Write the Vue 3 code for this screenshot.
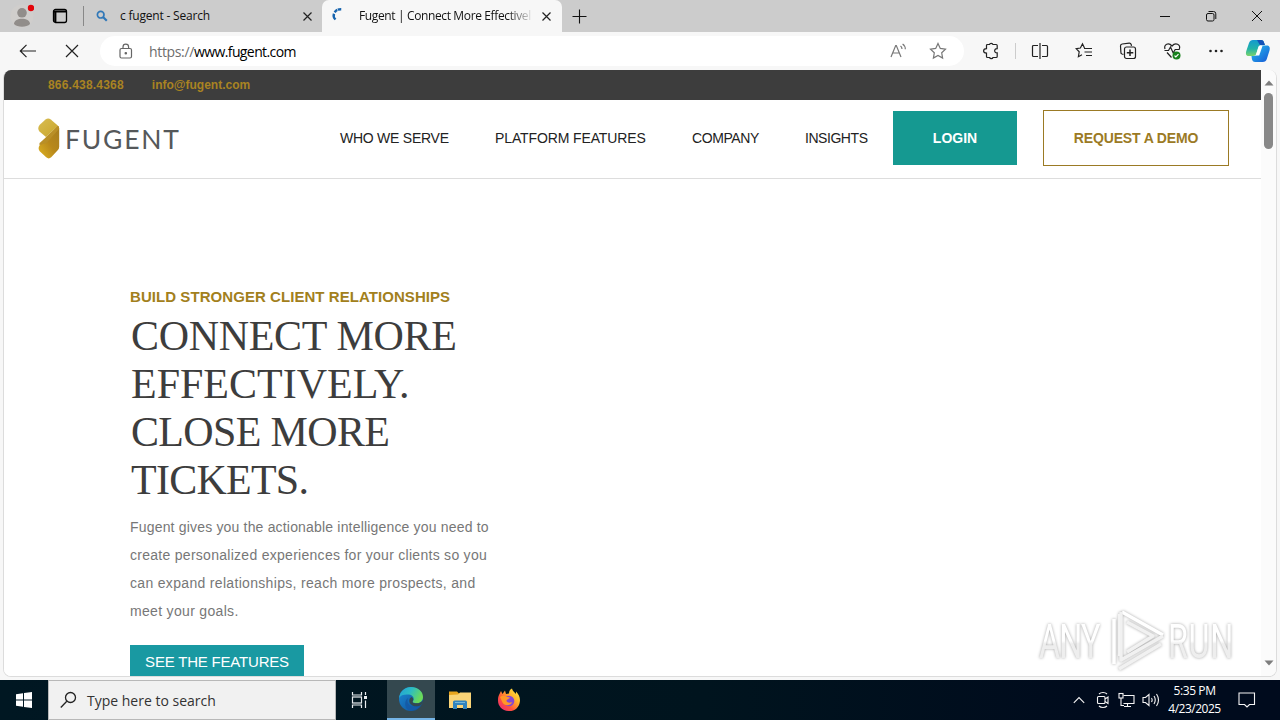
<script setup>
import { ref } from 'vue'

const contacts = [
  { label: '866.438.4368', tracking: 0.2 },
  { label: 'info@fugent.com', tracking: 0 },
]

const navItems = [
  { label: 'WHO WE SERVE', name: 'serve', tracking: -0.25 },
  { label: 'PLATFORM FEATURES', name: 'platform', tracking: -0.12 },
  { label: 'COMPANY', name: 'company', tracking: -0.4 },
  { label: 'INSIGHTS', name: 'insights', tracking: -0.45 },
]

const headline = [
  { text: 'CONNECT MORE', tracking: -0.33 },
  { text: 'EFFECTIVELY.', tracking: 0 },
  { text: 'CLOSE MORE', tracking: -0.65 },
  { text: 'TICKETS.', tracking: -0.75 },
]

const intro = [
  { text: 'Fugent gives you the actionable intelligence you need to', tracking: 0.18 },
  { text: 'create personalized experiences for your clients so you', tracking: 0.28 },
  { text: 'can expand relationships, reach more prospects, and', tracking: 0.32 },
  { text: 'meet your goals.', tracking: 0.32 },
]

const activeTab = ref('fugent')

const track = (item) => ({ letterSpacing: `${item.tracking}px` })
</script>

<template>
  <div class="desktop">
    <header class="tab-strip">
      <svg class="profile" width="24" height="24" viewBox="0 0 24 24">
        <circle cx="12" cy="12" r="11.5" fill="#d0cecc" />
        <circle cx="12" cy="8.800" r="4.800" fill="#918d8a" />
        <path d="M4 20c0-7 16-7 16 0-3 3.500-13 3.500-16 0z" fill="#918d8a" />
        <circle cx="21" cy="4" r="3.200" fill="#e3050b" />
      </svg>
      <svg class="tab-actions" width="16" height="16" viewBox="0 0 16 16">
        <rect x="1.500" y="1.500" width="13" height="13" rx="2" fill="none" stroke="#000" stroke-width="1.300" />
        <path d="M1.500 3.500h13M3.300 3v11" stroke="#000" stroke-width="2.200" />
      </svg>
      <span class="strip-divider"></span>

      <div class="tab" :class="{ active: activeTab === 'search' }">
        <svg class="favicon" width="12" height="12" viewBox="0 0 12 12" fill="none" stroke="#3178b8">
          <circle cx="4.700" cy="4.700" r="3.300" stroke-width="1.700" />
          <path d="M7 7l3.800 3.800" stroke-width="2.200" />
        </svg>
        <span class="tab-title first-title">c fugent - Search</span>
        <svg class="close" width="9" height="9" viewBox="0 0 9 9"><path d="M.5.5l8 8M8.500.5l-8 8" /></svg>
      </div>

      <div class="tab second-tab" :class="{ active: activeTab === 'fugent' }">
        <svg class="favicon spinner" width="14" height="14" viewBox="0 0 14 14" fill="none" stroke="#1764ae" stroke-width="2.400">
          <path d="M4.500 12.500C2.500 10.500 2.300 8.500 3 6.700" />
          <path d="M3.700 5.300C5 3 7.500 2 10.800 2.200" stroke-dasharray="3.500 .6" />
        </svg>
        <span class="tab-title second-title">Fugent | Connect More Effectivel</span>
        <svg class="close" width="9" height="9" viewBox="0 0 9 9"><path d="M.5.5l8 8M8.500.5l-8 8" /></svg>
      </div>

      <svg class="new-tab" width="15" height="15" viewBox="0 0 15 15"><path d="M7.500.5v14M.5 7.500h14" stroke="#111" stroke-width="1.100" /></svg>

      <div class="window-controls">
        <svg width="12" height="12" viewBox="0 0 12 12"><path d="M1 6.500h10" /></svg>
        <svg width="12" height="12" viewBox="0 0 12 12">
          <rect x="1.500" y="3.500" width="7.500" height="7.500" rx="1.500" />
          <path d="M3.500 1.500H8.500a2.300 2.300 0 0 1 2.300 2.300V9" />
        </svg>
        <svg width="12" height="12" viewBox="0 0 12 12"><path d="M1 1l10 10M11 1L1 11" /></svg>
      </div>
    </header>

    <div class="toolbar">
      <svg class="back" width="18" height="14" viewBox="0 0 18 14"><path d="M7.500.8L1.300 7l6.200 6.200M1.300 7H17" /></svg>
      <svg class="stop" width="14" height="14" viewBox="0 0 14 14"><path d="M1 1l12 12M13 1L1 13" /></svg>
      <div class="address">
        <svg class="lock" width="14" height="16" viewBox="0 0 14 16">
          <rect x="1" y="5.500" width="11.500" height="9.500" rx="1.500" />
          <path d="M4 5.500V4a2.800 2.800 0 0 1 5.600 0v1.500" />
          <circle cx="6.800" cy="10.200" r=".7" fill="#666" />
        </svg>
        <span class="url"><span>https://</span>www.fugent.com</span>
        <svg class="read-aloud" width="17" height="16" viewBox="0 0 17 16">
          <path d="M1 14L5.700 2.500h.6L11 14M2.800 10h6.400M10.500 3c1 .7 1.500 1.700 1.500 3M12.600 1c1.900 1.300 2.700 3 2.700 5.200" />
        </svg>
        <svg class="star" width="18" height="18" viewBox="0 0 18 18">
          <path d="M9 1.500l2.300 4.900 5.200.7-3.800 3.700.9 5.300L9 13.500l-4.600 2.600.9-5.300-3.800-3.700 5.200-.7z" />
        </svg>
      </div>
      <div class="tools">
        <svg width="18" height="18" viewBox="0 0 18 18">
          <path d="M5.500 2.500h2c.2-1.500 3.200-1.500 3.400 0h3.300a1 1 0 0 1 1 1v3.200c-3.400-.3-3.400 4.500 0 4.200v3.600a1 1 0 0 1-1 1H11c-.4 1.500-3 1.500-3.400 0H5.500a1 1 0 0 1-1-1v-3.400c-3.900-.3-3.900-4.100 0-4.400V3.500a1 1 0 0 1 1-1z" />
        </svg>
        <i></i>
        <svg width="18" height="18" viewBox="0 0 18 18">
          <path d="M9 1v16M7 3.500H2.500a1 1 0 0 0-1 1v9a1 1 0 0 0 1 1H7M11 3.500h4.500a1 1 0 0 1 1 1v9a1 1 0 0 1-1 1H11" />
        </svg>
        <svg width="18" height="18" viewBox="0 0 18 18">
          <path d="M9.500 6L7.500 1.800 5.400 6l-4.200.6 3 3.200-.8 4.900L7 12.800M9 6.500h8M9.500 10h7.500M11 13.500h6" />
        </svg>
        <svg width="18" height="18" viewBox="0 0 18 18">
          <path d="M4.500 12.300L3 12c-1-.3-1.200-1-1.100-1.800L1.500 4a2 2 0 0 1 1.700-2l7-.9c1.100-.1 1.700.5 2 1.400l.3 1.300" />
          <rect x="5.500" y="5" width="11" height="11.500" rx="2" />
          <path d="M11 7.500v6.500M7.800 10.800h6.500" stroke-width="1.500" />
        </svg>
        <svg width="20" height="18" viewBox="0 0 20 18">
          <path d="M2 7C.6 2.500 5.500-.2 9 4c3.500-4.200 9-1.500 7.300 3M1.500 8.500h4L7.500 5l2.700 6 2-3.500h4.500M4 10.500l4.500 5" />
          <circle cx="13.500" cy="13.500" r="4" fill="#18811d" stroke="none" />
          <path d="M11.500 13.600l1.300 1.200 2.700-2.700" stroke="#fff" />
        </svg>
        <svg width="18" height="18" viewBox="0 0 18 18" class="dots">
          <circle cx="3.500" cy="9" r="1.300" /><circle cx="9" cy="9" r="1.300" /><circle cx="14.500" cy="9" r="1.300" />
        </svg>
        <svg class="copilot" width="26" height="24" viewBox="0 0 26 24">
          <defs>
            <linearGradient id="copilot-left" x1="0" y1="0" x2="0" y2="1">
              <stop offset="0" stop-color="#1499cf" /><stop offset=".55" stop-color="#22b3a8" /><stop offset="1" stop-color="#7bd36b" />
            </linearGradient>
            <linearGradient id="copilot-right" x1="0" y1="0" x2="1" y2="1">
              <stop offset="0" stop-color="#25c0ef" /><stop offset="1" stop-color="#1757d5" />
            </linearGradient>
          </defs>
          <path d="M8 1h8c2 0 2.700 1.300 3.200 3l.7 2h-3.500c-2 0-2.800 1-3.400 3l-1.500 5c-.5 2-1.300 3-3.500 3H4c-3 0-3.500-2-2.700-5L4 4c.7-2 2-3 4-3z" fill="url(#copilot-left)" />
          <path d="M18 6.500h3.500c3 0 3.800 2 3 5l-2.600 8.300c-.7 2.200-2 3.200-4.200 3.200h-7.500c-2 0-2.800-1.200-3.300-3L6.500 17H9c2 0 3-1 3.500-3l1.800-5c.6-1.700 1.500-2.500 3.700-2.500z" fill="url(#copilot-right)" />
          <path d="M14 7h3.500l-3.300 9.500h-3.500z" fill="#fff" />
          <path d="M12 1h4c2 0 2.700 1.300 3.200 3l.7 2h-5z" fill="#1452b8" />
        </svg>
      </div>
    </div>

    <main class="viewport">
      <div class="page">
        <div class="contact-bar">
          <a v-for="contact in contacts" :key="contact.label" :style="track(contact)">{{ contact.label }}</a>
        </div>

        <div class="site-header">
          <svg class="logo" width="146" height="44" viewBox="0 0 146 44">
            <defs>
              <linearGradient id="gold-top" x1="0" y1="0" x2="1" y2="1">
                <stop offset="0" stop-color="#d8bd52" /><stop offset="1" stop-color="#c9a52b" />
              </linearGradient>
              <linearGradient id="gold-side" x1="1" y1="0" x2="0" y2="1">
                <stop offset="0" stop-color="#a57d20" /><stop offset=".5" stop-color="#b8881b" /><stop offset="1" stop-color="#dfb422" />
              </linearGradient>
            </defs>
            <path d="M2.500 9l6-5.500q2.700-2 5.300 0L21 9.800 9 21 2.500 15.500Q0 12.500 2.500 9z" fill="url(#gold-top)" />
            <path d="M21 9.800q1.200 1 1.200 3v18q0 2-1.500 3.500l-6.500 7q-2.500 2.200-5 0l-6.500-6q-2.200-3 0-6z" fill="url(#gold-side)" />
            <path d="M9 21L21 9.800q1.200 1 1.200 3L9.500 27l-7 2.300V27z" fill="#b98f27" />
            <path d="M0 23L9 21l-6 5.500z" fill="#fff" />
            <text x="28" y="33" textLength="114">FUGENT</text>
          </svg>
          <nav>
            <a v-for="item in navItems" :key="item.name" :class="item.name" :style="track(item)">{{ item.label }}</a>
          </nav>
          <button class="login">LOGIN</button>
          <button class="demo">REQUEST A DEMO</button>
        </div>

        <section class="hero">
          <p class="eyebrow">BUILD STRONGER CLIENT RELATIONSHIPS</p>
          <h1><span v-for="line in headline" :key="line.text" :style="track(line)">{{ line.text }}</span></h1>
          <p class="intro"><span v-for="line in intro" :key="line.text" :style="track(line)">{{ line.text }}</span></p>
          <button class="features">SEE THE FEATURES</button>
        </section>
      </div>

      <div class="scrollbar">
        <svg width="10" height="6" viewBox="0 0 10 6"><path d="M5 .5L9.500 5.500h-9z" /></svg>
        <span class="thumb"></span>
        <svg width="10" height="6" viewBox="0 0 10 6"><path d="M5 5.500L9.500.5h-9z" /></svg>
      </div>
    </main>

    <svg class="watermark" width="249" height="76" viewBox="0 0 249 76">
      <defs>
        <linearGradient id="mark-fade" x1="0" y1="0" x2="0" y2="1">
          <stop offset=".5" stop-color="#fff" /><stop offset=".55" stop-color="#eee" />
        </linearGradient>
      </defs>
      <g class="mark">
        <g transform="translate(8 56) scale(.66 1)"><text textLength="93">ANY</text></g>
        <g transform="translate(137 56) scale(.66 1)"><text textLength="99">RUN</text></g>
        <path d="M83 17v45M89 12v42M91 10l41 23" />
        <path d="M90 10v48l42-24M96 20l26 14-26 16M88 67l42-25" class="soft" />
      </g>
    </svg>

    <footer class="taskbar">
      <div class="start">
        <svg width="16" height="16" viewBox="0 0 16 16" fill="#fff">
          <path d="M0 2.200l7-1v6.300H0zM8 1l8-1v7.500H8zM0 8.500h7v6.300l-7-1zM8 8.500h8V16l-8-1z" />
        </svg>
      </div>
      <div class="search-box">
        <svg width="18" height="18" viewBox="0 0 18 18" fill="none" stroke="#222" stroke-width="1.300">
          <circle cx="10.500" cy="6.500" r="5" /><path d="M6.800 10.200L.8 16.500" />
        </svg>
        <span>Type here to search</span>
      </div>
      <div class="task">
        <svg width="18" height="16" viewBox="0 0 18 16" fill="none" stroke="#e8edf0" stroke-width="1.200">
          <path d="M1.500 0v3h9V0M1.500 16v-3h9v3" /><rect x="1.500" y="5" width="9" height="6" />
          <path d="M14.500 0v3M14.500 8.500V16" /><path d="M13 5.500h3" stroke-width="3" />
        </svg>
      </div>
      <div class="task running">
        <svg width="26" height="26" viewBox="0 0 26 26">
          <defs>
            <linearGradient id="edge-green" x1="0" y1="0" x2="1" y2=".4">
              <stop offset="0" stop-color="#239fd7" /><stop offset=".5" stop-color="#2cbcc4" /><stop offset="1" stop-color="#6bda58" />
            </linearGradient>
            <linearGradient id="edge-blue" x1="0" y1="0" x2="1" y2="1">
              <stop offset="0" stop-color="#1d8bd5" /><stop offset="1" stop-color="#0c4c96" />
            </linearGradient>
          </defs>
          <circle cx="13" cy="13" r="12" fill="url(#edge-blue)" />
          <path d="M1.100 12C2 5 7 1 13 1c7 0 12 4.500 12 10 0 4-3 6.300-6.500 6.300-3 0-4.500-1.100-3.500-2.300 2-3-.5-6-4-6.500C6.500 8 2.500 9 1.100 12z" fill="url(#edge-green)" />
          <path d="M10 12c-2 5 2 9.500 7.500 9 2.500-.2 4.500-1.500 5.500-2.500C20 23.500 15 25.500 10.500 24 6 21 6.500 14.500 10 12z" fill="#155aa6" />
          <path d="M13.500 11c2.200 1.500 2.200 3 1.200 4.300-.8 1.500 1.300 2 3.800 2 2.500 0 4.500-1 6.600-2.600-.5 2-1 3-2 4.300-5 3-11.500.5-11.800-4-.1-2 .8-3.300 2.200-4z" fill="#34484f" />
        </svg>
      </div>
      <div class="task">
        <svg width="22" height="20" viewBox="0 0 22 20">
          <path d="M0 1.500h8l2 2h12V6H0z" fill="#e8a51e" />
          <path d="M0 5l9-.5 2-2h11V18H0z" fill="#fad477" />
          <path d="M4 19v-7q0-1.500 1.500-1.500h11Q18 10.500 18 12v7h-4v-4H8v4z" fill="#2f83bd" />
          <path d="M6 12.500h10" stroke="#73b6d8" />
        </svg>
      </div>
      <div class="task">
        <svg width="24" height="24" viewBox="0 0 24 24">
          <defs>
            <linearGradient id="fox" x1="1" y1="0" x2="0" y2="1">
              <stop offset="0" stop-color="#fff04a" /><stop offset=".35" stop-color="#ffb52b" /><stop offset=".65" stop-color="#ff513b" /><stop offset="1" stop-color="#e52287" />
            </linearGradient>
          </defs>
          <path d="M2 7l2-4 1.500 3L8 2.500l1 3.500 3-.5c0-2.500 1-4 3-5 .5 2.500 2.500 3.500 4 5.500V3.500C22 6.500 23.500 10 22.800 14 22 20 17 23.500 11.500 23 5 22.500 1 18 1 12.500 1 10 1.200 9 2 7z" fill="url(#fox)" />
          <circle cx="12" cy="13" r="5.300" fill="#8447d3" />
          <path d="M3 9c3-2.500 6-1 7.500 0l2.500.5c-.5 1.700-3.500 1.500-3.500 3.500 1 2.500 5 1.500 6 1-2 4-8 4.500-10 .5z" fill="#ff9827" />
        </svg>
      </div>

      <div class="tray">
        <svg class="chevron" width="12" height="8" viewBox="0 0 12 8"><path d="M.8 6.800L6 1.500l5.200 5.300" /></svg>
        <svg class="meet" width="14" height="18" viewBox="0 0 14 18">
          <rect x="1.500" y="5.500" width="7.500" height="7" rx="1" /><path d="M9 8l3-2v6.500l-3-2M3 3c2-2 6-2 8 0M3 15c2 2 6 2 8 0" />
        </svg>
        <svg class="network" width="17" height="16" viewBox="0 0 17 16">
          <path d="M5.500 3.500H16v8H5.500M6 14.500h7M9.500 11.500v3M3 6v7.500h3" /><rect x="1" y="1.500" width="4" height="4.500" />
        </svg>
        <svg class="sound" width="18" height="16" viewBox="0 0 18 16">
          <path d="M1 5.500h2.500L7 2.500v11l-3.500-3H1zM9.500 6q1.300 2 0 4M12 4q2.500 4 0 8M14.500 2q4 6 0 12" />
        </svg>
        <div class="clock"><span class="time">5:35 PM</span><span class="date">4/23/2025</span></div>
        <svg class="notes" width="18" height="18" viewBox="0 0 18 18"><path d="M1 2h15.500v11.500h-5L9 16l-2.500-2.500H1z" /></svg>
      </div>
    </footer>
  </div>
</template>

<style>
body {
  overflow: hidden;
}
</style>

<style scoped>
.desktop {
  position: relative;
  display: flex;
  flex-direction: column;
  width: 1280px;
  height: 720px;
  overflow: hidden;
  background: #f7f7f7;
  font-family: "Open Sans", "Noto Sans", sans-serif;
}

.desktop * {
  box-sizing: border-box;
}

svg {
  flex: none;
}

button {
  border: 0;
  padding: 0;
  font-family: "Liberation Sans", Arial, sans-serif;
}

.tab-strip {
  display: flex;
  align-items: center;
  height: 32px;
  flex: none;
  background: #ccc;
}

.profile {
  margin-left: 10px;
}

.tab-actions {
  margin-left: 18px;
}

.strip-divider {
  width: 1px;
  height: 20px;
  margin-left: 15px;
  background: #888;
}

.tab {
  display: flex;
  align-items: center;
  width: 238px;
  height: 32px;
  padding-left: 12px;
}

.tab.active {
  border-radius: 7px 7px 0 0;
  background: #f7f7f7;
}

.second-tab {
  width: 240px;
  padding-left: 9px;
}

.tab-title {
  overflow: hidden;
  margin-left: 13px;
  font-size: 12px;
  line-height: 18px;
  white-space: nowrap;
  color: #111;
}

.first-title {
  width: 183px;
  margin-left: 12px;
  letter-spacing: -0.2px;
}

.second-title {
  width: 173px;
  margin-left: 14px;
  letter-spacing: -0.37px;
  mask-image: linear-gradient(90deg, #000 148px, transparent 175px);
}

.close {
  fill: none;
  stroke: #222;
  stroke-width: 1.2;
}

.second-tab .close {
  margin-left: 10px;
}

.spinner {
  align-self: flex-start;
  margin-top: 7px;
}

.new-tab {
  margin-left: 10px;
}

.window-controls {
  display: flex;
  gap: 34px;
  margin-left: auto;
  margin-right: 17px;
}

.window-controls svg {
  fill: none;
  stroke: #111;
}

.toolbar {
  display: flex;
  align-items: center;
  height: 38px;
  flex: none;
}

.toolbar svg {
  fill: none;
  stroke: #222;
  stroke-width: 1.2;
}

.back {
  margin-left: 19px;
}

.stop {
  margin-left: 28px;
}

.address {
  display: flex;
  align-items: center;
  width: 864px;
  height: 30px;
  margin-left: 21px;
  border-radius: 15px;
  background: #fff;
}

.address svg.lock {
  margin-left: 19px;
  stroke: #666;
}

.url {
  margin-left: 16px;
  font-size: 14px;
  letter-spacing: -0.6px;
  color: #000;
}

.url span {
  color: #6d6d6d;
  letter-spacing: -0.35px;
}

.address svg.read-aloud {
  margin-left: auto;
  stroke: #777;
}

.address svg.star {
  margin: 0 17px 0 22px;
  stroke: #777;
}

.tools {
  display: flex;
  align-items: center;
  margin-left: 18px;
}

.tools i {
  width: 1px;
  height: 16px;
  margin: 0 15px 0 15px;
  background: #ccc;
}

.tools svg + svg {
  margin-left: 26px;
}

.tools svg.dots {
  margin-left: 24px;
  fill: #222;
  stroke: none;
}

.tools svg.copilot {
  margin-left: 20px;
  stroke: none;
}

.viewport {
  display: flex;
  width: 1274px;
  height: 607px;
  flex: none;
  margin-left: 3px;
  border: solid #dcdcdc;
  border-width: 0 1px 1px;
  border-radius: 8px;
  overflow: hidden;
  background: #fff;
}

.page {
  width: 1257px;
  height: 606px;
  overflow: hidden;
  background: #fff;
  font-family: "Liberation Sans", Arial, sans-serif;
}

.contact-bar {
  display: flex;
  align-items: center;
  gap: 28px;
  height: 30px;
  padding-left: 44px;
  background: #3d3d3d;
  color: #a98322;
  font-size: 12px;
  font-weight: 700;
}

.site-header {
  display: flex;
  align-items: center;
  height: 79px;
  padding-bottom: 2px;
  border-bottom: 1px solid #ddd;
}

.logo {
  margin-left: 33px;
}

.logo text {
  font-family: Lato, sans-serif;
  font-size: 26.5px;
  fill: #55585a;
}

nav {
  display: flex;
  width: 553px;
  margin-left: 157px;
  color: #222;
  font-size: 14px;
  line-height: 20px;
  white-space: nowrap;
}

.serve {
  width: 155px;
}

.platform {
  width: 197px;
}

.company {
  width: 113px;
}

.login {
  width: 124px;
  height: 54px;
  background: #159991;
  color: #fff;
  font-size: 14px;
  font-weight: 700;
}

.demo {
  width: 186px;
  height: 56px;
  margin-left: 26px;
  border: 1px solid #9b7a24;
  background: #fff;
  color: #9b7a24;
  font-size: 14px;
  font-weight: 700;
  letter-spacing: -0.15px;
}

.hero {
  display: flex;
  flex-direction: column;
  align-items: flex-start;
  padding: 108px 0 0 126px;
}

.hero p,
.hero h1 {
  margin: 0;
  white-space: nowrap;
}

.hero span {
  display: block;
}

.hero .eyebrow {
  color: #a2801c;
  font-size: 15px;
  font-weight: 700;
  line-height: 20px;
  letter-spacing: 0.06px;
}

.hero h1 {
  margin-top: 5px;
  padding-left: 1px;
  color: #3d3d3d;
  font-family: "Liberation Serif", "Times New Roman", serif;
  font-size: 42px;
  font-weight: 400;
  line-height: 48px;
}

.hero .intro {
  margin-top: 9px;
  color: #777;
  font-size: 14px;
  line-height: 28px;
}

.features {
  width: 174px;
  height: 34px;
  margin-top: 20px;
  padding-bottom: 2px;
  flex: none;
  background: #1999a2;
  color: #fff;
  font-size: 15px;
  letter-spacing: -0.2px;
}

.scrollbar {
  display: flex;
  flex-direction: column;
  align-items: center;
  flex: 1;
  padding: 10px 0;
  background: #fbfbfb;
}

.scrollbar svg {
  fill: #7d7d7d;
}

.thumb {
  width: 9px;
  height: 56px;
  margin-top: 7px;
  margin-bottom: auto;
  border-radius: 5px;
  background: #888;
}

.watermark {
  position: absolute;
  left: 1031px;
  top: 602px;
}

.mark {
  fill: url(#mark-fade);
  filter: drop-shadow(0 0 1.5px rgba(0, 0, 0, 0.35));
}

.mark text {
  font-family: Roboto, sans-serif;
  font-size: 49px;
  font-weight: 400;
}

.mark path {
  fill: none;
  stroke: #fff;
  stroke-width: 3.5;
  stroke-linejoin: round;
}

.mark path.soft {
  stroke: #f1f1f1;
}

.taskbar {
  display: flex;
  height: 40px;
  margin-top: auto;
  background: linear-gradient(90deg, #001722 0%, #00141e 55%, #000b1d 85%);
}

.start,
.task {
  display: flex;
  align-items: center;
  justify-content: center;
  width: 49px;
  height: 40px;
}

.start {
  width: 48px;
}

.search-box {
  display: flex;
  align-items: center;
  width: 288px;
  height: 40px;
  padding-left: 11px;
  border: 1px solid #b8b8b8;
  background: #f1f1f1;
}

.search-box span {
  margin-left: 9px;
  color: #333;
  font-size: 14px;
}

.search-box + .task {
  width: 51px;
  padding-right: 3px;
}

.task.running {
  width: 48px;
  border-bottom: 2px solid #75b5e7;
  background: #34484f;
}

.tray {
  display: flex;
  align-items: center;
  margin-left: auto;
  color: #fff;
}

.tray svg {
  fill: none;
  stroke: #f4f4f4;
  stroke-width: 1.1;
}

.tray .meet {
  margin-left: 11px;
}

.tray .network {
  margin-left: 8px;
}

.tray .sound {
  margin-left: 7px;
}

.clock {
  display: flex;
  flex-direction: column;
  align-items: center;
  width: 69px;
  font-size: 12px;
  line-height: 18px;
  white-space: nowrap;
}

.time {
  letter-spacing: -0.4px;
}

.date {
  letter-spacing: -0.5px;
}

.tray .notes {
  margin-left: 9px;
  margin-right: 24px;
}
</style>
